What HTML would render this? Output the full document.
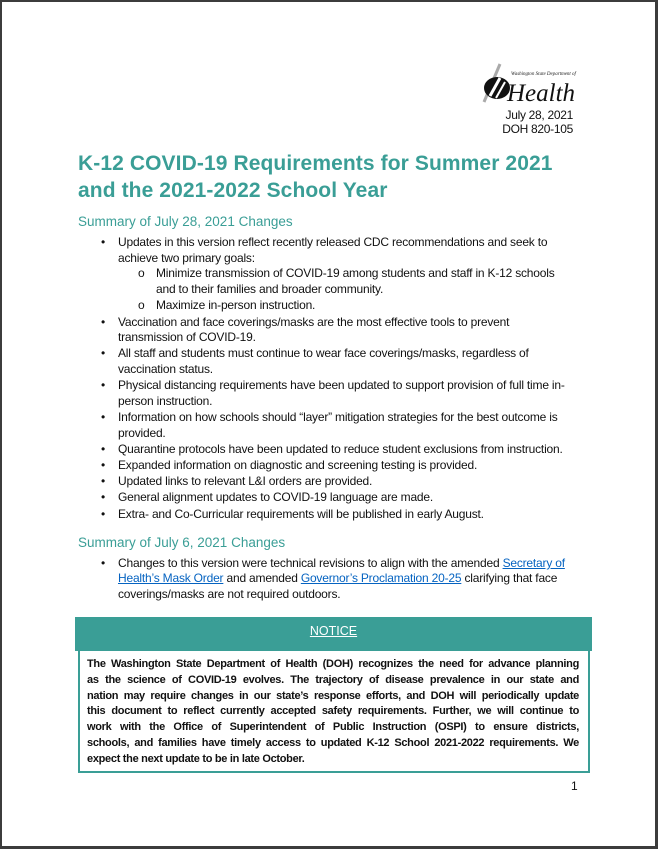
<!DOCTYPE html>
<html><head><meta charset="utf-8"><style>
html,body{margin:0;padding:0}
body{width:658px;height:849px;background:#3c3c3c;position:relative;overflow:hidden;font-family:"Liberation Sans",sans-serif}
.page{position:absolute;left:2px;top:2px;width:653px;height:844px;background:#fff}
.a{position:absolute;white-space:nowrap}
.t{font-size:12px;letter-spacing:-0.2px;color:#111;line-height:14px}
h1{position:absolute;left:78px;top:150px;margin:0;font-size:21px;line-height:27px;color:#3a9e96;font-weight:bold;white-space:nowrap;letter-spacing:0.1px}
.h2{font-size:13.5px;color:#3a9e96;line-height:16px}
a{color:#0563c1;text-decoration:underline}
.b{font-weight:bold;font-size:11px;letter-spacing:-0.3px;line-height:15.8px;color:#111;text-align:justify;text-align-last:justify;width:492px;white-space:nowrap}
</style></head><body><div class="page"></div>

<svg class="a" style="left:478px;top:62px" width="36" height="44" viewBox="0 0 36 44">
<path d="M22 2 L6 40" stroke="#aaa" stroke-width="3" fill="none"/>
<ellipse cx="19" cy="26" rx="13" ry="11" fill="#111"/>
<path d="M12 34 L22 16" stroke="#fff" stroke-width="3"/>
<path d="M18 36 L27 20" stroke="#fff" stroke-width="2"/>
</svg>
<div class="a" style="left:511px;top:72px;font-family:'Liberation Serif',serif;font-style:italic;font-size:5px;color:#222">Washington State Department of</div>
<div class="a" style="left:507px;top:80px;font-family:'Liberation Serif',serif;font-style:italic;font-size:25px;color:#111;line-height:28px">Health</div>
<div class="a t" style="right:85px;top:108px;font-size:12px;letter-spacing:-0.3px">July 28, 2021</div>
<div class="a t" style="right:85px;top:122px;font-size:12px;letter-spacing:-0.3px">DOH 820-105</div>

<h1>K-12 COVID-19 Requirements for Summer 2021<br>and the 2021-2022 School Year</h1>

<div class="a h2" style="left:78px;top:214px">Summary of July 28, 2021 Changes</div>

<div class="a t" style="left:101px;top:235px">•</div>
<div class="a t" style="left:118px;top:235px">Updates in this version reflect recently released CDC recommendations and seek to</div>
<div class="a t" style="left:118px;top:251px">achieve two primary goals:</div>
<div class="a t" style="left:138px;top:266px">o</div>
<div class="a t" style="left:156px;top:266px">Minimize transmission of COVID-19 among students and staff in K-12 schools</div>
<div class="a t" style="left:156px;top:282px">and to their families and broader community.</div>
<div class="a t" style="left:138px;top:298px">o</div>
<div class="a t" style="left:156px;top:298px">Maximize in-person instruction.</div>
<div class="a t" style="left:101px;top:315px">•</div>
<div class="a t" style="left:118px;top:315px">Vaccination and face coverings/masks are the most effective tools to prevent</div>
<div class="a t" style="left:118px;top:330px">transmission of COVID-19.</div>
<div class="a t" style="left:101px;top:346px">•</div>
<div class="a t" style="left:118px;top:346px">All staff and students must continue to wear face coverings/masks, regardless of</div>
<div class="a t" style="left:118px;top:362px">vaccination status.</div>
<div class="a t" style="left:101px;top:378px">•</div>
<div class="a t" style="left:118px;top:378px">Physical distancing requirements have been updated to support provision of full time in-</div>
<div class="a t" style="left:118px;top:394px">person instruction.</div>
<div class="a t" style="left:101px;top:410px">•</div>
<div class="a t" style="left:118px;top:410px">Information on how schools should “layer” mitigation strategies for the best outcome is</div>
<div class="a t" style="left:118px;top:426px">provided.</div>
<div class="a t" style="left:101px;top:442px">•</div>
<div class="a t" style="left:118px;top:442px">Quarantine protocols have been updated to reduce student exclusions from instruction.</div>
<div class="a t" style="left:101px;top:458px">•</div>
<div class="a t" style="left:118px;top:458px">Expanded information on diagnostic and screening testing is provided.</div>
<div class="a t" style="left:101px;top:474px">•</div>
<div class="a t" style="left:118px;top:474px">Updated links to relevant L&amp;I orders are provided.</div>
<div class="a t" style="left:101px;top:490px">•</div>
<div class="a t" style="left:118px;top:490px">General alignment updates to COVID-19 language are made.</div>
<div class="a t" style="left:101px;top:507px">•</div>
<div class="a t" style="left:118px;top:507px">Extra- and Co-Curricular requirements will be published in early August.</div>

<div class="a h2" style="left:78px;top:535px">Summary of July 6, 2021 Changes</div>
<div class="a t" style="left:101px;top:556px">•</div>
<div class="a t" style="left:118px;top:556px">Changes to this version were technical revisions to align with the amended <a>Secretary of</a></div>
<div class="a t" style="left:118px;top:571px"><a>Health’s Mask Order</a> and amended <a>Governor’s Proclamation 20-25</a> clarifying that face</div>
<div class="a t" style="left:118px;top:587px">coverings/masks are not required outdoors.</div>

<div class="a" style="left:75px;top:617px;width:517px;height:34px;background:#3a9e96"></div>
<div class="a" style="left:75px;top:624px;width:517px;text-align:center;font-size:12.5px;color:#fff;text-decoration:underline">NOTICE</div>
<div class="a" style="left:78px;top:650px;width:508px;height:121px;border:2px solid #3a9e96;border-top:none"></div>
<div class="a" style="left:87px;top:657px">
<div class="b">The Washington State Department of Health (DOH) recognizes the need for advance planning</div>
<div class="b">as the science of COVID-19 evolves. The trajectory of disease prevalence in our state and</div>
<div class="b">nation may require changes in our state’s response efforts, and DOH will periodically update</div>
<div class="b">this document to reflect currently accepted safety requirements. Further, we will continue to</div>
<div class="b">work with the Office of Superintendent of Public Instruction (OSPI) to ensure districts,</div>
<div class="b">schools, and families have timely access to updated K-12 School 2021-2022 requirements. We</div>
<div class="b" style="text-align-last:left">expect the next update to be in late October.</div>
</div>
<div class="a t" style="left:571px;top:779px">1</div>
</body></html>
